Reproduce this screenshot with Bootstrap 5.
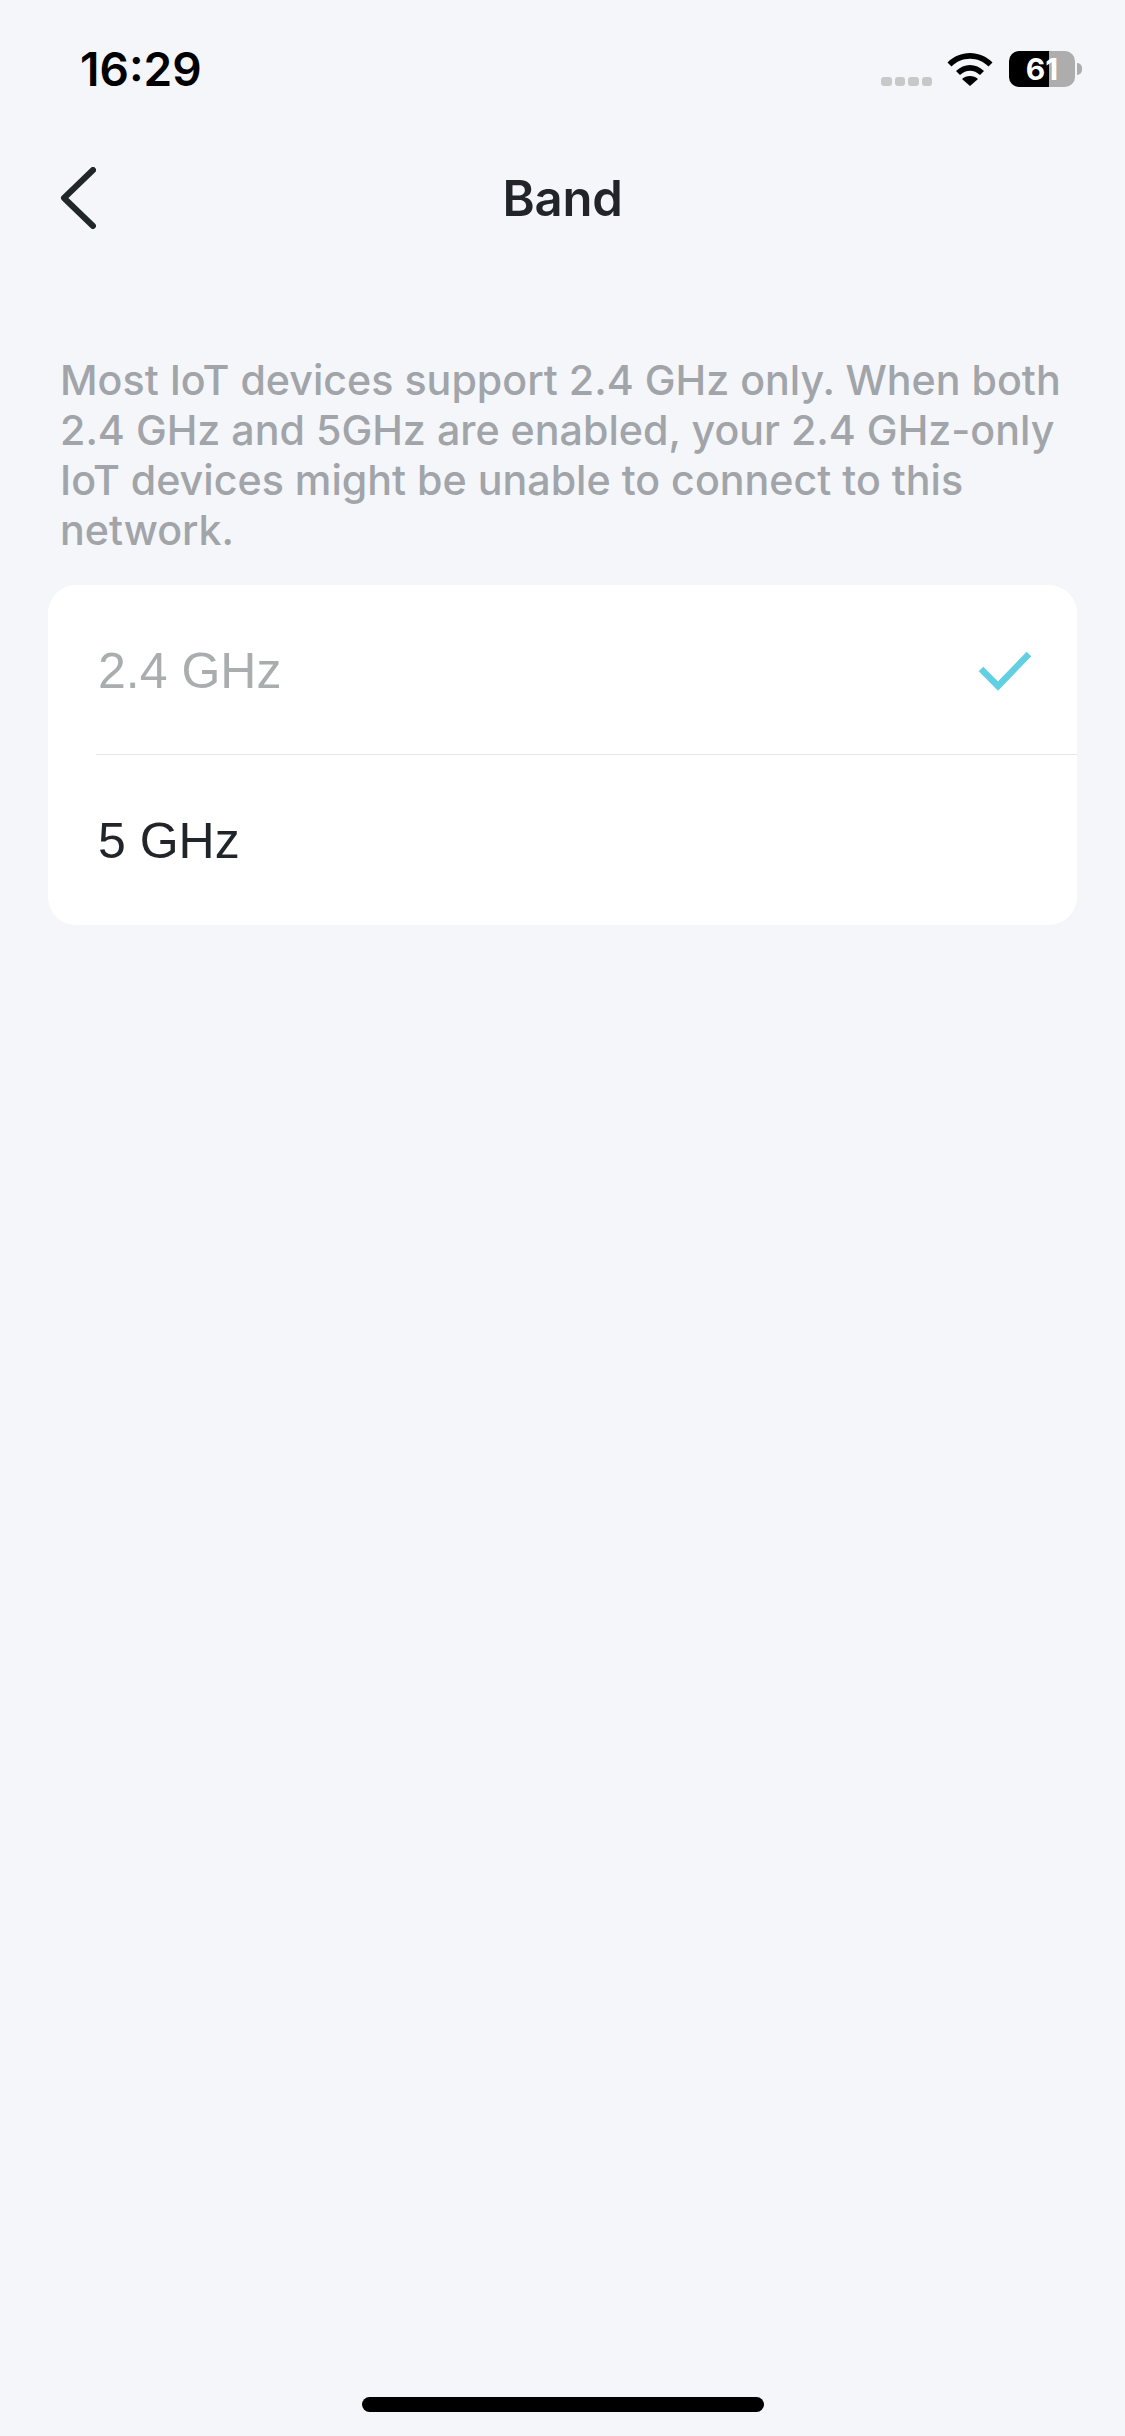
<!DOCTYPE html>
<html lang="en">
<head>
    <meta charset="UTF-8">
    <meta name="viewport" content="width=device-width, initial-scale=1">
    <title>Band</title>
    <link href="https://cdn.jsdelivr.net/npm/bootstrap@5.3.0/dist/css/bootstrap.min.css" rel="stylesheet">
    <style>
        html, body { height: 100%; }
        body { background-color: #f4f6fa; font-family: Inter, "Liberation Sans", sans-serif; color: #212529; }
        .screen { height: 2436px; position: relative; overflow: hidden; }
        .status-row { height: 138px; padding: 0 43px 0 80px; }
        .clock { font-size: 46px; font-weight: 600; color: #000; line-height: 1; }
        .dots { gap: 3px; margin-top: 24px; margin-right: 15px; }
        .dots span { width: 10.500px; height: 9px; border-radius: 3px; background: #c8c8c8; }
        .batt { width: 66px; height: 36px; border-radius: 10px; overflow: hidden; background: linear-gradient(90deg, #000 0, #000 40px, #adadad 40px); color: #fff; font-size: 30px; font-weight: 700; line-height: 36px; text-align: center; margin-left: 16px; }
        .batt-tip { width: 5px; height: 12px; background: #adadad; border-radius: 0 6px 6px 0; margin-left: 2px; }
        .title-row { height: 120px; }
        .back-btn { left: 60px; top: 29px; }
        .page-title { font-size: 49px; font-weight: 600; line-height: 1; margin: 0; letter-spacing: -.2px; }
        .intro { font-size: 41.200px; font-weight: 450; line-height: 50px; color: #a1a4a8; padding: 0 48px 0 60px; margin: 97px 0 30px; }
        .band-list { margin: 0 48px; background: #fff; border-radius: 28px; overflow: hidden; }
        .band-row { height: 170px; padding: 2px 46px 0 50px; font-family: "Liberation Sans", Arial, sans-serif; font-size: 50px; line-height: 1; }
        .band-row + .band-row { position: relative; }
        .band-row + .band-row::before { content: ""; position: absolute; left: 48px; right: 0; top: -1px; height: 1px; background: #e5e5e7; }
        .band-off { color: #a9adae; }
        .home-bar { left: 362px; top: 2397px; width: 402px; height: 15px; border-radius: 8px; background: #000; }
    </style>
</head>
<body>
    <div class="screen">
        <div class="status-row d-flex justify-content-between align-items-center">
            <div class="clock">16:29</div>
            <div class="d-flex align-items-center">
                <div class="dots d-flex"><span></span><span></span><span></span><span></span></div>
                <svg width="46" height="34" viewBox="0 0 46 34">
                    <path d="M0.5 10.500C6.500 4.500 14.500 1 23 1s16.500 3.500 22.500 9.500l-4 4C36.500 9.500 30 6.800 23 6.800S9.500 9.500 4.500 14.500z" fill="#000"/>
                    <path d="M9 19C13 15 18 13 23 13s10 2 14 6l-4 4c-3-2.800-6.500-4.300-10-4.300S16 20.200 13 23z" fill="#000"/>
                    <path d="M15 27c2-2 5-3 8-3s6 1 8 3l-8 7z" fill="#000"/>
                </svg>
                <div class="batt">61</div>
                <div class="batt-tip"></div>
            </div>
        </div>
        <div class="title-row position-relative d-flex justify-content-center align-items-center">
            <svg class="back-btn position-absolute" width="36" height="62" viewBox="0 0 36 62">
                <path d="M33 3L4 31l29 28" fill="none" stroke="#212629" stroke-width="6" stroke-linecap="round" stroke-linejoin="round"/>
            </svg>
            <h1 class="page-title">Band</h1>
        </div>
        <p class="intro">Most IoT devices support 2.4 GHz only. When both 2.4 GHz and 5GHz are enabled, your 2.4 GHz-only IoT devices might be unable to connect to this network.</p>
        <div class="band-list">
            <div class="band-row band-off d-flex justify-content-between align-items-center">
                <span>2.4 GHz</span>
                <svg width="56" height="40" viewBox="0 0 56 40">
                    <path d="M6 18l17 17L54 3" fill="none" stroke="#62cfe3" stroke-width="6.500"/>
                </svg>
            </div>
            <div class="band-row d-flex align-items-center"><span>5 GHz</span></div>
        </div>
        <div class="home-bar position-absolute"></div>
    </div>
    <script src="https://cdn.jsdelivr.net/npm/bootstrap@5.3.0/dist/js/bootstrap.bundle.min.js"></script>
</body>
</html>
